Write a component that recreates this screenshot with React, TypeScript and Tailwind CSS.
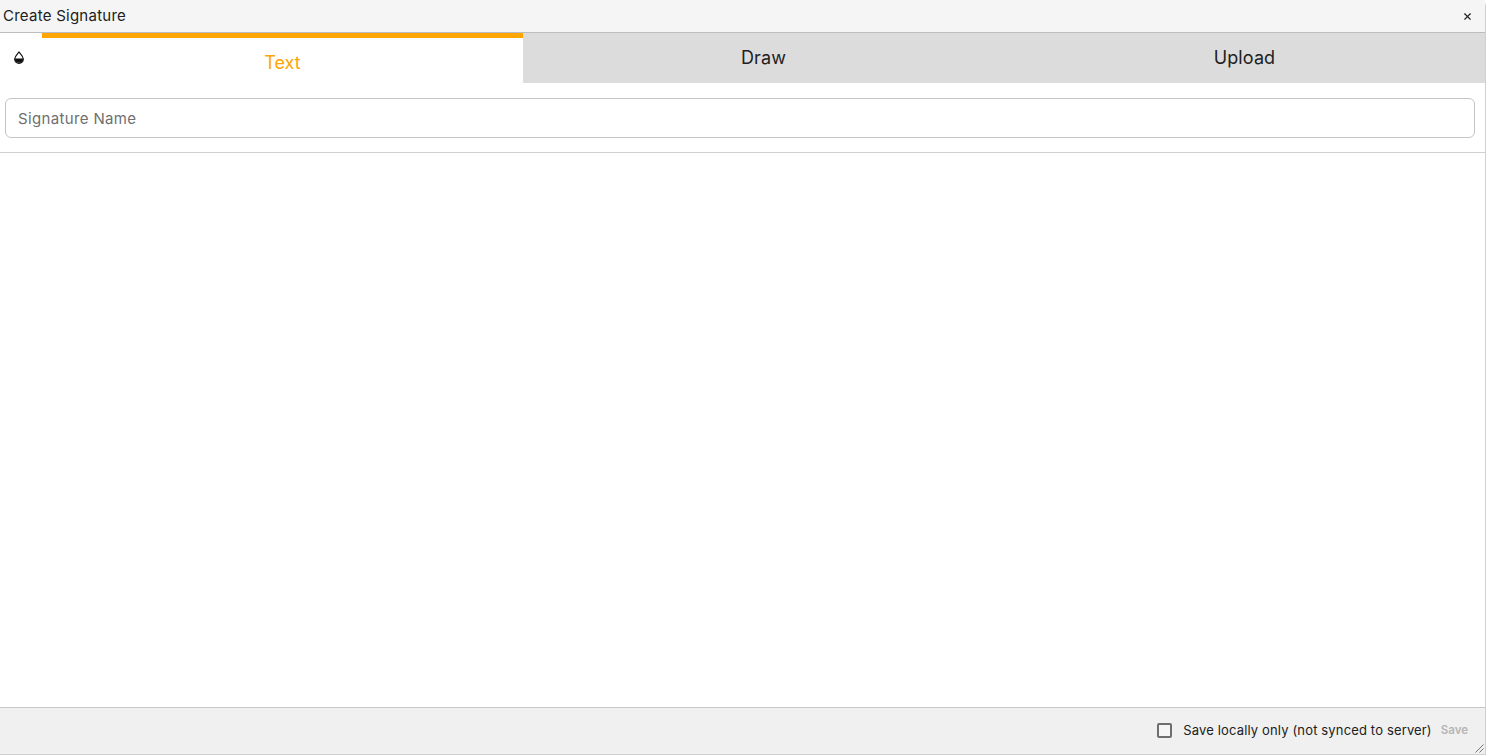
import { X } from 'lucide-react';

const tabs = ['Draw', 'Upload'];

export default function App() {
  return (
    <div className="h-[755px] w-[1487px] overflow-hidden bg-white font-['Inter',sans-serif] text-[#212121]">
      <div className="flex h-full w-[1486px] flex-col rounded-tr-md border-b border-r border-[#d0d0d0]">
        {/* Title bar */}
        <div className="flex h-[33px] shrink-0 items-center justify-between border-b border-[#bdbdbd] bg-[#f5f5f5] pl-[3px] pr-[12px]">
          <span className="text-[15px] tracking-[0.25px]">Create Signature</span>
          <X size={11} strokeWidth={2.5} className="text-[#222]" />
        </div>

        {/* Tabs */}
        <div className="flex h-[50px] shrink-0">
          <div className="flex w-[42px] shrink-0 justify-center pr-[5px] pt-[18px]">
            <svg width="10" height="13" viewBox="0 0 10 13">
              <path d="M5 1 C6.5 3 9.3 5.200 9.300 8 A4.300 4.300 0 0 1 0.700 8 C0.700 5.200 3.500 3 5 1 Z" fill="white" stroke="#111" strokeWidth="1.200" />
              <path d="M0.700 7.500 H9.300 A4.300 4.300 0 0 1 0.700 7.500 Z" fill="#111" />
            </svg>
          </div>
          <div className="flex flex-1 items-center justify-center border-t-[5px] border-[#ffa500] bg-white pt-[3px] text-[18px] text-[#ffa500]">
            Text
          </div>
          {tabs.map((tab) => (
            <div key={tab} className="flex flex-1 items-center justify-center bg-[#dcdcdc] pb-[2px] text-[18px] tracking-[0.1px]">
              {tab}
            </div>
          ))}
        </div>

        {/* Signature name */}
        <div className="shrink-0 border-b border-[#d0d0d0] pb-[14px] pl-[5px] pr-[10px] pt-[15px]">
          <input
            placeholder="Signature Name"
            className="h-[40px] w-full rounded-[6px] border border-[#c4c4c4] px-[12px] text-[15px] tracking-[0.35px] outline-none placeholder:text-[#6f6f6f]"
          />
        </div>

        <div className="flex-1" />

        {/* Footer */}
        <div className="relative flex h-[47px] shrink-0 items-center justify-end gap-[9px] border-t border-[#c8c8c8] bg-[#f0f0f0] pb-[1px] pr-[17px]">
          <label className="flex items-center gap-[11px] text-[13px] tracking-[0.15px]">
            <span className="h-[15px] w-[15px] rounded-[2px] border-2 border-[#6e6e6e] bg-[#f5f5f5]" />
            Save locally only (not synced to server)
          </label>
          <span className="text-[11.5px] font-semibold text-[#b5b5b5]">Save</span>
          <svg className="absolute bottom-[1px] right-[1px]" width="9" height="9" viewBox="0 0 9 9">
            <path d="M8.500 0.500 L0.500 8.500 M8.500 4.500 L4.500 8.500" stroke="#777" strokeWidth="1" />
          </svg>
        </div>
      </div>
    </div>
  );
}
